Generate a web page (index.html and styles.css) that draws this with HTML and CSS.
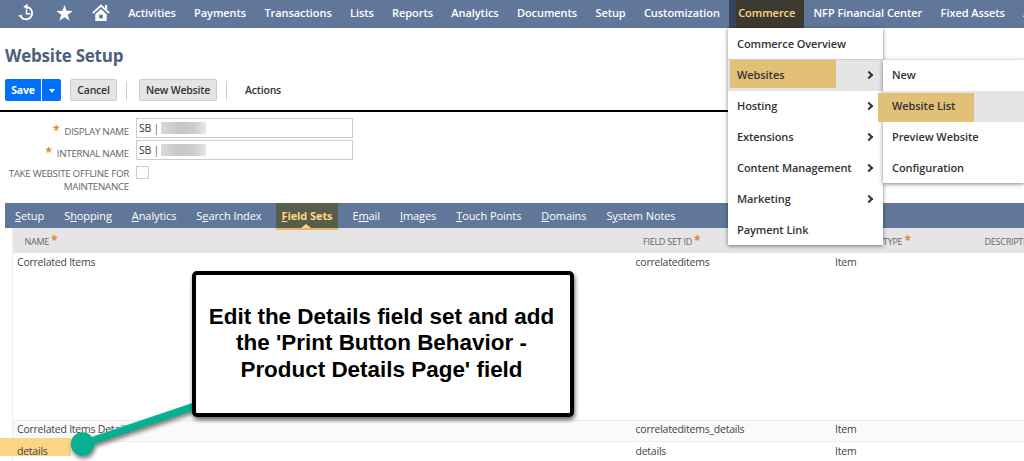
FILE: index.html
```html
<!DOCTYPE html>
<html lang="en">
<head>
    <meta charset="UTF-8">
    <meta name="viewport" content="width=device-width, initial-scale=1.0">
    <title>Website Setup</title>
    <link rel="stylesheet" href="styles.css">
</head>
<body>
    <nav class="navbar">
        <div class="nav-icons">
            <svg width="18" height="20" viewBox="0 0 18 20" fill="none" stroke="#fff" stroke-width="1.7">
                <path d="M8.500 3.900A6.200 6.200 0 1 1 2.500 13"/>
                <path d="M8.500 6.800v4h3.800" stroke-width="1.5"/>
                <path d="M9.500.8v6L5.300 3.800z" fill="#fff" stroke="none"/>
                <path d="M.5 13.200l3.200-.8" stroke-width="1.3"/>
            </svg>
            <svg width="17" height="16" viewBox="0 0 17 16" fill="#fff">
                <path d="M8.500 0l2 5.800 6.300.1-5 3.800 1.800 6.100-5.100-3.600-5.100 3.600 1.800-6.100-5-3.800 6.300-.1z"/>
            </svg>
            <svg width="18" height="17" viewBox="0 0 18 17">
                <path d="M.8 9.200L9 1.600l8.200 7.600" fill="none" stroke="#fff" stroke-width="1.800"/>
                <path d="M13 1h2.200v5L13 4z" fill="#fff"/>
                <path d="M3.300 10.300L9 5l5.700 5.300V17H3.300z" fill="#fff"/>
                <path d="M7.200 10.700h3.600v3.700H7.200z" fill="#607799"/>
            </svg>
        </div>
        <ul class="nav-list">
            <li>Activities</li>
            <li>Payments</li>
            <li>Transactions</li>
            <li>Lists</li>
            <li>Reports</li>
            <li>Analytics</li>
            <li>Documents</li>
            <li>Setup</li>
            <li>Customization</li>
            <li class="open">Commerce</li>
            <li>NFP Financial Center</li>
            <li>Fixed Assets</li>
            <li>A</li>
        </ul>
    </nav>

    <!-- Commerce dropdown -->
    <ul class="menu commerce-menu">
        <li class="overview">Commerce Overview</li>
        <li class="active"><span class="mark"></span><span>Websites</span><i class="arrow"></i></li>
        <li>Hosting<i class="arrow"></i></li>
        <li>Extensions<i class="arrow"></i></li>
        <li>Content Management<i class="arrow"></i></li>
        <li>Marketing<i class="arrow"></i></li>
        <li>Payment Link</li>
    </ul>
    <ul class="menu websites-menu">
        <li>New</li>
        <li class="active"><span class="mark"></span><span>Website List</span></li>
        <li>Preview Website</li>
        <li>Configuration</li>
    </ul>

    <header class="page-header">
        <h1>Website Setup</h1>
        <div class="toolbar">
            <div class="save">
                <button>Save</button>
                <button class="save-more"><i class="caret"></i></button>
            </div>
            <button class="btn cancel">Cancel</button>
            <span class="divider"></span>
            <button class="btn new-website">New Website</button>
            <span class="divider"></span>
            <span class="actions">Actions</span>
        </div>
    </header>

    <!-- Main fields -->
    <div class="form">
        <div class="form-row">
            <label><b>*</b>DISPLAY NAME</label>
            <div class="input">SB <em>|</em><span class="redacted"></span></div>
        </div>
        <div class="form-row">
            <label><b>*</b>INTERNAL NAME</label>
            <div class="input">SB <em>|</em><span class="redacted"></span></div>
        </div>
        <div class="form-row">
            <label>TAKE WEBSITE OFFLINE FOR<br>MAINTENANCE</label>
            <div class="checkbox"></div>
        </div>
    </div>

    <ul class="tabs">
        <li><u>S</u>etup</li>
        <li>S<u>h</u>opping</li>
        <li><u>A</u>nalytics</li>
        <li>S<u>e</u>arch Index</li>
        <li class="current"><u>F</u>ield Sets</li>
        <li>E<u>m</u>ail</li>
        <li><u>I</u>mages</li>
        <li><u>T</u>ouch Points</li>
        <li><u>D</u>omains</li>
        <li>S<u>y</u>stem Notes</li>
    </ul>

    <!-- Field sets -->
    <div class="table">
        <div class="row head">
            <div>NAME<b>*</b></div>
            <div>FIELD SET ID<b>*</b></div>
            <div>FIELD SET TYPE<b>*</b></div>
            <div>DESCRIPTION</div>
        </div>
        <div class="row tall">
            <div>Correlated Items</div>
            <div>correlateditems</div>
            <div>Item</div>
            <div></div>
        </div>
        <div class="row even">
            <div>Correlated Items Details</div>
            <div>correlateditems_details</div>
            <div>Item</div>
            <div></div>
        </div>
        <div class="row">
            <div><span class="mark"></span><span>details</span></div>
            <div>details</div>
            <div>Item</div>
            <div></div>
        </div>
    </div>

    <!-- Callout -->
    <svg class="pointer" width="140" height="70" viewBox="0 0 140 70">
        <path d="M12.500 50L128 11" stroke="#08af91" stroke-width="7.500"/>
        <circle cx="12.500" cy="50" r="11.700" fill="#08af91"/>
    </svg>
    <div class="callout">Edit the Details field set and add the 'Print Button Behavior - Product Details Page' field</div>
</body>
</html>
```
FILE: styles.css
```css
/* Global Styles */
* {
    margin: 0;
    padding: 0;
    box-sizing: border-box;
}

body {
    position: relative;
    width: 1024px;
    height: 461px;
    overflow: hidden;
    background-color: #ffffff;
    font-family: 'Open Sans', sans-serif;
    font-size: 11px;
    color: #444444;
}

ul {
    list-style: none;
}

.navbar {
    display: flex;
    height: 28px;
    background-color: #607799;
    overflow: hidden;
}

.nav-icons {
    display: flex;
    align-items: center;
    gap: 19.5px;
    width: 119px;
    flex: none;
    padding: 0 0 3px 18px;
}

.nav-list {
    display: flex;
    flex: 1;
    min-width: 0;
    overflow: hidden;
}

.nav-list li {
    padding: 0 9.15px;
    line-height: 26px;
    font-weight: 600;
    letter-spacing: -0.06px;
    color: #ffffff;
    white-space: nowrap;
}

.nav-list .open {
    background: linear-gradient(to right, #37455f 7px, #3b3a31 7px);
    color: #ffd683;
}

/* Menus */
.menu {
    position: absolute;
    z-index: 10;
    background-color: #ffffff;
    box-shadow: 0 1px 4px rgba(0, 0, 0, 0.5);
    font-weight: 600;
    letter-spacing: -0.08px;
    color: #333333;
}

.menu li {
    position: relative;
    display: flex;
    align-items: center;
    justify-content: space-between;
    height: 31px;
    padding: 0 9px 2px;
}

.menu li span {
    position: relative;
}

.menu .active {
    background-color: #e5e5e5;
}

.commerce-menu {
    left: 728px;
    top: 28px;
    width: 155px;
    height: 217px;
}

.menu .overview {
    height: 32px;
    padding-bottom: 0;
    border-bottom: 1px solid #cccccc;
}

.websites-menu {
    left: 883px;
    top: 60px;
    width: 141px;
    height: 123px;
}

.menu li .mark {
    position: absolute;
    background-color: #e2c078;
}

.commerce-menu .mark {
    left: 2px;
    top: 0;
    width: 106px;
    height: 28px;
}

.websites-menu .mark {
    left: -5px;
    top: 2px;
    width: 96px;
    height: 29px;
}

.arrow {
    width: 6px;
    height: 6px;
    margin-right: 2px;
    border-top: 2px solid #333333;
    border-right: 2px solid #333333;
    transform: rotate(45deg);
}

/* Header */
.page-header {
    height: 84px;
    padding: 17px 5px 0;
    border-bottom: 2px solid #000000;
}

.page-header h1 {
    font-size: 17px;
    line-height: 22px;
    font-weight: 700;
    letter-spacing: -0.25px;
    color: #4d5f79;
}

.toolbar {
    display: flex;
    align-items: center;
    margin-top: 12px;
    height: 22px;
}

button {
    height: 22px;
    border: none;
    font-family: inherit;
    font-size: 10.5px;
    font-weight: 600;
    letter-spacing: -0.2px;
    line-height: 20px;
}

.save {
    display: flex;
    gap: 1px;
}

.save button {
    width: 36px;
    background-color: #0070fb;
    color: #ffffff;
    font-weight: 700;
    border-radius: 2px 0 0 2px;
}

.save .save-more {
    width: 19px;
    border-radius: 0 2px 2px 0;
}

.caret {
    display: inline-block;
    vertical-align: middle;
    border: 3px solid transparent;
    border-top: 4px solid #ffffff;
    border-bottom: 0;
}

.btn {
    background-color: #e4e4e4;
    border: 1px solid #cccccc;
    border-radius: 2px;
    color: #333333;
}

.cancel {
    width: 47px;
    margin-left: 9px;
}

.new-website {
    width: 78px;
}

.divider {
    width: 1px;
    height: 19px;
    margin: 0 12px 0 9px;
    background-color: #cccccc;
}

.actions {
    margin: -1px 0 0 6px;
    font-size: 10.5px;
    font-weight: 600;
    letter-spacing: -0.2px;
    color: #333333;
}

/* Form */
.form {
    padding-top: 6px;
    height: 91px;
}

.form-row {
    display: flex;
    height: 22px;
}

.form-row label {
    width: 129px;
    margin-right: 7px;
    padding-top: 7px;
    text-align: right;
    font-size: 9.8px;
    line-height: 13px;
    letter-spacing: -0.3px;
    color: #666666;
    white-space: nowrap;
}

.form-row:last-child label {
    padding-top: 5px;
}

label b,
.head b {
    color: #d98b1f;
    font-size: 12px;
    line-height: 10px;
}

label b {
    margin-right: 5px;
}

.input {
    width: 217px;
    height: 20px;
    padding-left: 2px;
    border: 1px solid #cccccc;
    font-size: 10.5px;
    line-height: 19px;
    letter-spacing: -0.3px;
    color: #333333;
}

.input em {
    font-style: normal;
    color: #8c5364;
}

.redacted {
    display: inline-block;
    vertical-align: middle;
    width: 45px;
    height: 12px;
    margin: -2px 0 0 2px;
    background: linear-gradient(to right, #dadada, #c7c7c7 40%, #cfcfcf 75%, #e6e6e6);
}

.checkbox {
    width: 13px;
    height: 13px;
    margin-top: 4px;
    border: 1px solid #cccccc;
}

/* Tabs */
.tabs {
    display: flex;
    height: 25px;
    margin-left: 5px;
    background-color: #607799;
}

.tabs li {
    padding: 0 10px;
    line-height: 26px;
    letter-spacing: -0.09px;
    color: #ffffff;
    white-space: nowrap;
}

.tabs u {
    text-underline-offset: 1px;
}

.tabs .current {
    position: relative;
    z-index: 1;
    height: 27px;
    padding: 0 6px 0 5px;
    margin: 0 4px 0 5px;
    background-color: #595d4c;
    border-bottom: 2px solid #e8b660;
    color: #ffd683;
    font-weight: 700;
}

.tabs .current::after {
    content: '';
    position: absolute;
    left: 25px;
    bottom: 0;
    border: 5px solid transparent;
    border-bottom: 4px solid #ffd683;
    border-top: 0;
}

/* Table */
.table {
    margin-left: 12px;
    border-left: 1px solid #eeeeee;
}

.row {
    display: grid;
    grid-template-columns: 618.5px 199.500px 142px 1fr;
    height: 21px;
    padding-left: 4px;
    font-size: 10.5px;
    line-height: 18px;
    letter-spacing: -0.23px;
    white-space: nowrap;
}

.row div {
    position: relative;
}

.row .mark + span {
    position: relative;
}

.head {
    height: 25px;
    padding-left: 11.5px;
    background-color: #e5e5e5;
    font-size: 9px;
    line-height: 28px;
    letter-spacing: -0.25px;
    color: #666666;
}

.head div {
    min-width: 0;
    overflow: hidden;
}

.head b {
    margin-left: 2px;
}

.tall {
    height: 167px;
}

.even {
    height: 22px;
    line-height: 17px;
    background-color: #fafafa;
    border-top: 1px solid #eeeeee;
    border-bottom: 1px solid #eeeeee;
}

.row .mark {
    position: absolute;
    left: -17px;
    top: -4px;
    width: 71px;
    height: 18px;
    background-color: #fbd583;
}

/* Callout */
.pointer {
    position: absolute;
    left: 70px;
    top: 394px;
    filter: drop-shadow(1px 3px 2px rgba(0, 0, 0, 0.5));
}

.callout {
    position: absolute;
    left: 192px;
    top: 271px;
    width: 382px;
    height: 146px;
    padding: 29px 10px 29px 7px;
    background-color: #ffffff;
    border: 4px solid #000000;
    border-radius: 5px;
    box-shadow: 1px 3px 4px rgba(0, 0, 0, 0.6);
    font-family: 'Liberation Sans', Arial, sans-serif;
    font-size: 22.45px;
    font-weight: bold;
    line-height: 26.3px;
    text-align: center;
    color: #000000;
}
```
